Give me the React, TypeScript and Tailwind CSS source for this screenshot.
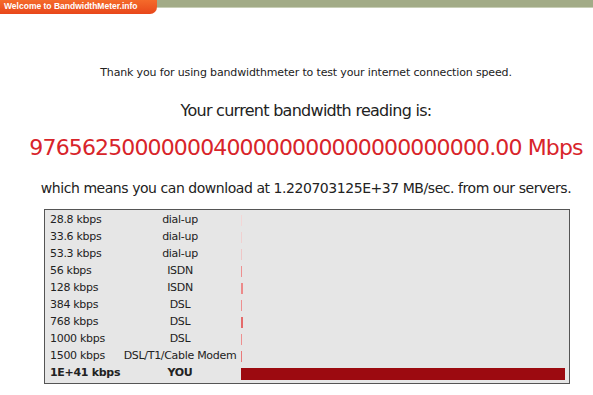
const rows = [
  { speed: "28.8 kbps", type: "dial-up", w: 1, c: "bg-[#f3d6d6]" },
  { speed: "33.6 kbps", type: "dial-up", w: 1, c: "bg-[#f0d0d0]" },
  { speed: "53.3 kbps", type: "dial-up", w: 1, c: "bg-[#efc6c6]" },
  { speed: "56 kbps", type: "ISDN", w: 1, c: "bg-[#ee8f8f]" },
  { speed: "128 kbps", type: "ISDN", w: 2, c: "bg-[#ec8a8a]" },
  { speed: "384 kbps", type: "DSL", w: 1, c: "bg-[#ee8f8f]" },
  { speed: "768 kbps", type: "DSL", w: 2, c: "bg-[#e46a6a]" },
  { speed: "1000 kbps", type: "DSL", w: 1, c: "bg-[#ee8f8f]" },
  { speed: "1500 kbps", type: "DSL/T1/Cable Modem", w: 1, c: "bg-[#e97a7a]" },
];

export default function App() {
  return (
    <div className="w-[593px] h-[395px] bg-white overflow-hidden font-['DejaVu_Sans',sans-serif] text-[#222]">
      <div className="flex items-start">
        <div className="w-[157px] h-[14px] rounded-br-[7px] bg-gradient-to-b from-[#f46a2a] to-[#e8461a] text-white text-[8.5px] font-bold leading-[13px] pl-[4px] whitespace-nowrap font-['Liberation_Sans',sans-serif]">
          Welcome to BandwidthMeter.info
        </div>
        <div className="flex-1 h-[8px] bg-[#a2ab87] border-b border-[#c8ceb6]" />
      </div>

      <div className="flex flex-col items-center pl-[19px]">
        <p className="mt-[52px] text-[11px] leading-[14px] tracking-[-0.15px]">
          Thank you for using bandwidthmeter to test your internet connection speed.
        </p>
        <p className="mt-[21px] text-[16px] leading-[20px] tracking-[-0.72px]">
          Your current bandwidth reading is:
        </p>
        <p className="mt-[14px] text-[22px] leading-[26px] text-[#d8242a] tracking-[-0.86px]">
          97656250000000400000000000000000000.00 Mbps
        </p>
        <p className="mt-[18px] text-[14px] leading-[18px] tracking-[-0.45px]">
          which means you can download at 1.220703125E+37 MB/sec. from our servers.
        </p>
      </div>

      <div className="ml-[44px] mt-[12px] w-[526px] h-[175px] border border-[#555] bg-[#e6e6e6] pt-[2px] text-[11px] tracking-[-0.3px]">
        {rows.map((r) => (
          <div key={r.speed} className="flex items-center h-[17px]">
            <div className="w-[76px] pl-[5px] whitespace-nowrap">{r.speed}</div>
            <div className="w-[118px] text-center whitespace-nowrap">{r.type}</div>
            <div className="flex-1 pl-[2px] pr-[4px] flex items-center">
              <div className={`h-[11px] ${r.c}`} style={{ width: r.w }} />
            </div>
          </div>
        ))}
        <div className="flex items-center h-[17px] font-bold">
          <div className="w-[76px] pl-[5px] whitespace-nowrap">1E+41 kbps</div>
          <div className="w-[118px] text-center whitespace-nowrap">YOU</div>
          <div className="flex-1 pl-[2px] pr-[4px] flex items-center">
            <div className="h-[12px] w-full bg-[#9c0a10]" />
          </div>
        </div>
      </div>
    </div>
  );
}
